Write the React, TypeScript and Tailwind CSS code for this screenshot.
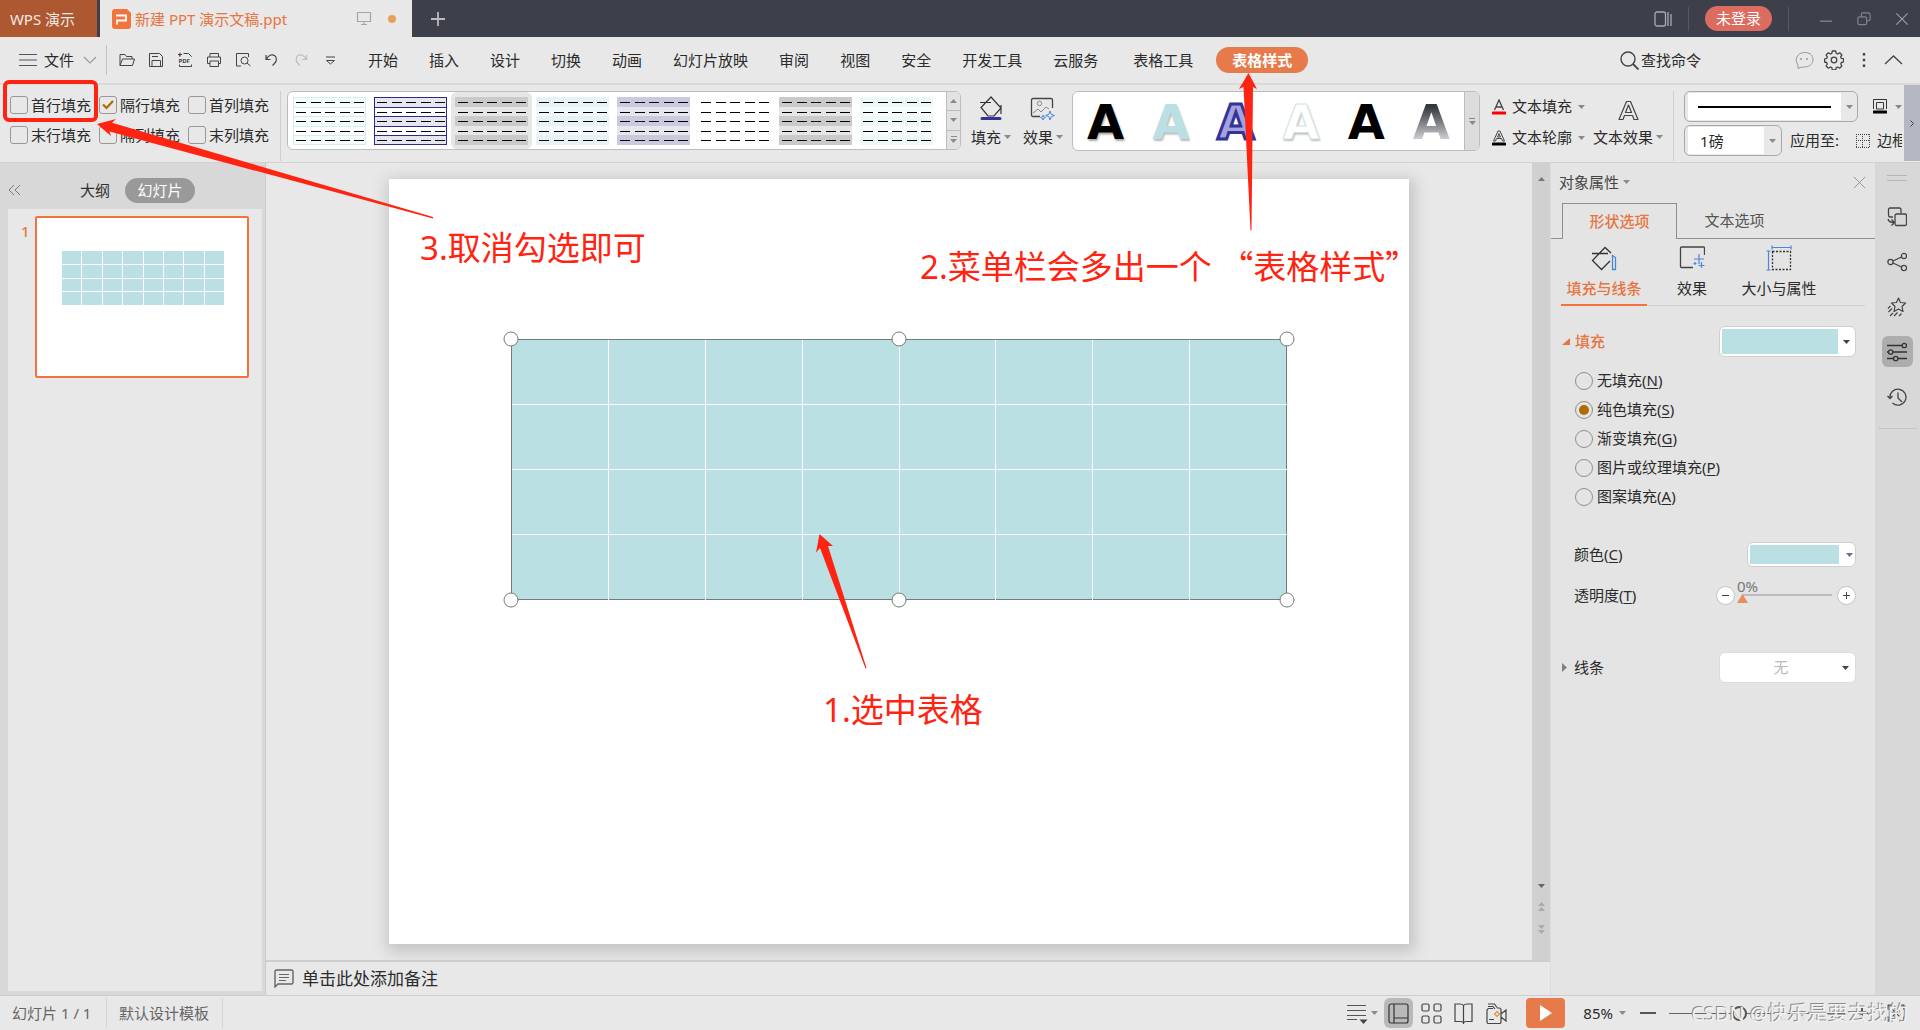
import React from "react";

const MENUS = ["开始", "插入", "设计", "切换", "动画", "幻灯片放映", "审阅", "视图", "安全", "开发工具", "云服务"];

type IconProps = {
  size?: number;
  color?: string;
  children: React.ReactNode;
};

const Icon: React.FC<IconProps> = ({ size = 16, color = "#444", children }) => (
  <svg
    width={size}
    height={size}
    viewBox="0 0 16 16"
    fill="none"
    stroke={color}
    strokeWidth="1"
    className="block shrink-0"
  >
    {children}
  </svg>
);

const Caret: React.FC<{ color?: string }> = ({ color = "#8a8a8a" }) => (
  <svg width="7" height="4" viewBox="0 0 7 4" className="block shrink-0">
    <path d="M0 0h7L3.500 4z" fill={color} />
  </svg>
);

const CaretUp: React.FC<{ color?: string }> = ({ color = "#8a8a8a" }) => (
  <svg width="7" height="4" viewBox="0 0 7 4" className="block shrink-0">
    <path d="M0 4h7L3.500 0z" fill={color} />
  </svg>
);

const TitleBar = () => (
  <header className="flex h-[37px] shrink-0 bg-[#3d404b] text-[15px]">
    <button className="w-[97px] bg-[#ad5830] pt-px pr-3 text-[#f3e9e4]">WPS 演示</button>
    <div className="ml-[3px] flex w-[312px] items-center bg-[#e8e8e8] pt-px pl-3">
      <svg width="19" height="20" viewBox="0 0 19 20" className="mr-1 shrink-0">
        <path d="M3 0h12l4 4v13a3 3 0 0 1-3 3H3a3 3 0 0 1-3-3V3a3 3 0 0 1 3-3z" fill="#f3733c" />
        <path d="M4 6.500h10v5H5v4" stroke="#fff" strokeWidth="1.8" fill="none" />
      </svg>
      <span className="flex-1 whitespace-nowrap text-[#e8743f]">新建 PPT 演示文稿.ppt</span>
      <Icon color="#a5a5a5">
        <path d="M1.500 1.500h13v9h-13zM8 10.500v3M5 13.500h6" strokeWidth="1.2" />
      </Icon>
      <span className="mr-4 ml-4 size-2 rounded-full bg-[#e6a05c]"></span>
    </div>
    <button aria-label="新建标签" className="flex w-[52px] items-center justify-center">
      <Icon color="#b9bac0">
        <path d="M8 1v14M1 8h14" strokeWidth="1.8" />
      </Icon>
    </button>
    <div className="ml-auto flex items-center">
      <button aria-label="工作区">
        <svg width="18" height="18" viewBox="0 0 18 18" fill="none" stroke="#a9abb2">
          <rect x="1" y="2" width="10.500" height="14" rx="2" strokeWidth="1.3" />
          <path d="M14 2v14M17 4v12" strokeWidth="1.3" />
        </svg>
      </button>
      <span className="ml-4 h-6 w-px bg-[#555862]"></span>
      <button className="ml-4 h-[25px] w-[67px] rounded-full bg-[#dc6b60] text-white">未登录</button>
      <span className="ml-4 h-6 w-px bg-[#555862]"></span>
      <div className="flex items-center gap-6 pr-[11px] pl-[30px]">
        <button aria-label="最小化">
          <Icon size={14} color="#82848c">
            <path d="M1 10.500h14" strokeWidth="1.5" />
          </Icon>
        </button>
        <button aria-label="还原">
          <Icon size={14} color="#82848c">
            <path d="M5 5V2.500a1.500 1.500 0 0 1 1.500-1.500H13a2 2 0 0 1 2 2V8a2 2 0 0 1-2 2h-2" strokeWidth="1.3" />
            <rect x="1" y="5.500" width="10" height="9" rx="2" strokeWidth="1.3" />
          </Icon>
        </button>
        <button aria-label="关闭">
          <Icon size={14} color="#a0a2a9">
            <path d="M1.500 1.500l13 13M14.500 1.500l-13 13" strokeWidth="1.2" />
          </Icon>
        </button>
      </div>
    </div>
  </header>
);

const QuickTools = () => (
  <div className="flex gap-[13px]">
    <button aria-label="打开">
      <Icon>
        <path d="M1 13.500V2.500h5l1.500 2H13v2.500M1 13.500L3.500 7H15.500l-2 6.500z" strokeLinejoin="round" />
      </Icon>
    </button>
    <button aria-label="保存">
      <Icon>
        <path d="M1.500 1.500h10l3 3v10h-13zM4 14V8.500h8.500V14M4 4.500h6" strokeLinejoin="round" />
      </Icon>
    </button>
    <button aria-label="输出为PDF">
      <svg width="16" height="16" viewBox="0 0 16 16" fill="none" stroke="#444">
        <path d="M2.500 4.500V3M1 2.500h4M3 .5v4M6.500 1.500h5l3 3V5M2.500 12.500v2h12v-2" />
        <text x="1.500" y="11.300" fontSize="6" fontWeight="700" fill="#444" stroke="none">PDF</text>
      </svg>
    </button>
    <button aria-label="打印">
      <Icon>
        <path d="M4 5V1.500h8.500V5M4 11.500H1.500V5h13v6.500H12.500M4 9h8.500v5.500H4z" strokeLinejoin="round" />
      </Icon>
    </button>
    <button aria-label="打印预览">
      <Icon>
        <path d="M6 14H1.500V1.500h12V5" />
        <circle cx="9.500" cy="8.500" r="3.500" />
        <path d="M12 11l3.500 3" />
      </Icon>
    </button>
    <button aria-label="撤销">
      <Icon>
        <path d="M2 3v4.500h4.500M2.500 7.500C4 3 8 2 10.500 3.500s2.500 6 0 8L8.500 13.500" strokeWidth="1.200" />
      </Icon>
    </button>
    <button aria-label="恢复">
      <Icon color="#bdbdbd">
        <path d="M13.500 3v4.500H9M13 7.500C11.500 3 7.500 2 5 3.500s-2.500 6 0 8L7 13.500" strokeWidth="1.200" />
      </Icon>
    </button>
    <button aria-label="自定义工具栏">
      <Icon>
        <path d="M4 5h9M4.500 8.500h8L8.500 12z" />
      </Icon>
    </button>
  </div>
);

const MenuBar = () => (
  <nav className="flex h-[48px] shrink-0 items-center border-b-2 border-[#dadada] text-[15px] text-[#2b2b2b]">
    <button className="ml-[19px] flex items-center gap-[7px]">
      <svg width="18" height="14" viewBox="0 0 18 14" stroke="#555">
        <path d="M0 1.500h18M0 7h18M0 12.500h18" />
      </svg>
      文件
      <svg width="14" height="8" viewBox="0 0 14 8" fill="none" stroke="#999" className="ml-[2px]">
        <path d="M1 1l6 6 6-6" strokeWidth="1.2" />
      </svg>
    </button>
    <span className="mr-3 ml-[9px] h-[30px] w-px bg-[#c2c2c2]"></span>
    <QuickTools />
    <div className="ml-[30px] flex gap-[31px] whitespace-nowrap">
      {MENUS.map((menu) => (
        <button key={menu}>{menu}</button>
      ))}
    </div>
    <button className="ml-[35px] whitespace-nowrap">表格工具</button>
    <button className="ml-[23px] h-[26px] w-[92px] rounded-full bg-[#e67a4a] font-bold whitespace-nowrap text-white">
      表格样式
    </button>
    <button className="ml-auto flex items-center gap-[2px] whitespace-nowrap">
      <svg width="19" height="19" viewBox="0 0 19 19" fill="none" stroke="#444" strokeWidth="1.400">
        <circle cx="8" cy="8" r="7" />
        <path d="M13 13l5.500 5.500" strokeWidth="1.800" />
      </svg>
      查找命令
    </button>
    <div className="ml-[94px] flex items-center gap-[10px] pr-[17px]">
      <button aria-label="反馈">
        <svg width="19" height="19" viewBox="0 0 19 19" fill="none" stroke="#999">
          <path d="M3 17.500V14C-1 9 2 1.500 9.500 1.500S18 6 18 9s-3 7-8.500 7C7 16 6 16 3 17.500z" />
          <path d="M6 7v2M12 7v2" strokeWidth="1.500" />
        </svg>
      </button>
      <button aria-label="设置">
        <svg width="20" height="20" viewBox="0 0 20 20" fill="none" stroke="#444" strokeWidth="1.300">
          <circle cx="10" cy="10" r="2.800" />
          <path
            d="M8.300 1h3.400l.5 2.300 1.500.7 2-1.300 2.200 2.200-1.200 2 .7 1.500 2.200.5v3l-2.200.6-.7 1.500 1.200 2-2.300 2.200-2-1.200-1.400.6-.5 2.400H8.300l-.5-2.400-1.400-.6-2 1.200-2.300-2.200 1.200-2-.7-1.500L.6 12V9l2-.6.7-1.500-1.200-2 2.200-2.200 2 1.300 1.500-.7z"
            strokeLinejoin="round"
          />
        </svg>
      </button>
      <button aria-label="更多" className="w-5">
        <Icon color="#444">
          <path d="M10 1v2.500M10 6.800v2.500M10 12.600v2.500" strokeWidth="2.400" />
        </Icon>
      </button>
      <button aria-label="收起功能区">
        <svg width="19" height="10" viewBox="0 0 19 10" fill="none" stroke="#444">
          <path d="M1 9l8.500-8L18 9" strokeWidth="1.300" />
        </svg>
      </button>
    </div>
  </nav>
);

type CheckProps = { label: string; checked?: boolean };

const Check: React.FC<CheckProps> = ({ label, checked = false }) => {
  const [on, setOn] = React.useState<boolean>(checked);
  return (
    <label className="relative flex h-[30px] items-center gap-[3px] whitespace-nowrap">
      <input
        type="checkbox"
        checked={on}
        onChange={() => setOn(!on)}
        className="size-[18px] appearance-none rounded-[3px] border border-[#989898] bg-[#e8e8e8]"
      />
      {on && (
        <svg width="12" height="10" viewBox="0 0 12 10" className="absolute left-[3px]">
          <path d="M1 4.500l3.500 3.500L11 1" stroke="#b36a00" strokeWidth="2.200" fill="none" />
        </svg>
      )}
      {label}
    </label>
  );
};

type Style = { odd: string; even: string; line?: string; selected?: boolean };

const TABLE_STYLES: Style[] = [
  { odd: "#f5fcfc", even: "#ffffff", line: "#d8eceb" },
  { odd: "#e6e6ef", even: "#ffffff", line: "#2a2a8c" },
  { odd: "#cacaca", even: "#e6e6e6", selected: true },
  { odd: "#e6f2f4", even: "#f3f8fb" },
  { odd: "#cacade", even: "#e6e6ee" },
  { odd: "#ffffff", even: "#ffffff" },
  { odd: "#cacaca", even: "#e6e6e6" },
  { odd: "#eff8f8", even: "#f8fcfc" },
];

const StyleThumb: React.FC<{ style: Style }> = ({ style }) => (
  <svg width="73" height="48" viewBox="0 0 73 48" shapeRendering="crispEdges" className="block">
    {[0, 1, 2, 3, 4].map((i) => (
      <g key={i}>
        <rect x="0" y={i * 9.5} width="73" height="9.5" fill={i % 2 ? style.even : style.odd} />
        <path d={`M3 ${Math.round(i * 9.5) + 5.5}h69`} stroke="#000" strokeDasharray="10 4.6" />
      </g>
    ))}
    {style.line && (
      <path
        d="M.5 .5h72v47h-72zM0 10.500h73M0 19.500h73M0 29.500h73M0 38.500h73"
        stroke={style.line}
        fill="none"
      />
    )}
  </svg>
);

const StyleGallery = () => (
  <div className="ml-[6px] flex h-[59px] shrink-0 overflow-hidden rounded-md border border-[#bdbdbd] bg-white">
    <div className="flex pr-[9px] pl-px">
      {TABLE_STYLES.map((style, i) => (
        <button
          key={i}
          aria-label={"表格样式 " + (i + 1)}
          className={
            style.selected
              ? "flex w-[81px] items-center justify-center rounded-md bg-[#e6e6e6]"
              : "flex w-[81px] items-center justify-center"
          }
        >
          <StyleThumb style={style} />
        </button>
      ))}
    </div>
    <div className="flex w-[14px] flex-col divide-y divide-[#bdbdbd] border-l border-[#bdbdbd] bg-[#e2e2e2]">
      <button aria-label="上一行" className="flex flex-1 items-center justify-center">
        <CaretUp />
      </button>
      <button aria-label="下一行" className="flex flex-1 items-center justify-center">
        <Caret />
      </button>
      <button aria-label="更多样式" className="flex flex-1 flex-col items-center justify-center gap-[2px]">
        <span className="h-px w-[6px] bg-[#8a8a8a]"></span>
        <Caret />
      </button>
    </div>
  </div>
);

const BigTool: React.FC<{ label: string; children: React.ReactNode }> = ({ label, children }) => (
  <button className="flex flex-col items-center gap-[5px] whitespace-nowrap">
    <span className="flex h-[26px] items-end">{children}</span>
    <span className="flex items-center gap-[3px]">
      {label}
      <Caret />
    </span>
  </button>
);

const LETTER = "font-['DejaVu_Sans','Noto_Sans',sans-serif] text-[48px] leading-[52px] font-bold";

const WordArtGallery = () => (
  <div className="ml-[9px] flex h-[60px] shrink-0 overflow-hidden rounded-md border border-[#bdbdbd] bg-white">
    <div className="flex w-[391px] items-center justify-around pt-[2px]">
      <button className={LETTER + " text-black [text-shadow:1px_2px_2px_#aaa]"}>A</button>
      <button className={LETTER + " text-[#bae0e3] [text-shadow:1px_2px_2px_#bbb]"}>A</button>
      <button className={LETTER + " text-[#a3a3dd] [-webkit-text-stroke:3px_#33339a]"}>A</button>
      <button className={LETTER + " text-white [-webkit-text-stroke:1px_#cfe3e3] [text-shadow:1px_2px_2px_#bbb]"}>
        A
      </button>
      <button className={LETTER + " text-black"}>A</button>
      <button className={LETTER + " bg-linear-to-b from-[#35383d] from-20% to-[#c8c9cc] to-80% bg-clip-text text-transparent"}>
        A
      </button>
    </div>
    <button
      aria-label="更多艺术字"
      className="flex w-[15px] flex-col items-center justify-center gap-[2px] border-l border-[#bdbdbd] bg-[#dcdcdc]"
    >
      <span className="h-px w-[6px] bg-[#8a8a8a]"></span>
      <Caret />
    </button>
  </div>
);

const Ribbon = () => (
  <section className="flex h-[78px] shrink-0 items-start overflow-hidden border-b border-[#d2d2d2] pt-[6px] text-[15px] text-[#2b2b2b]">
    <div className="-mt-px ml-[10px] grid shrink-0 grid-cols-[89px_89px_92px]">
      <Check label="首行填充" />
      <Check label="隔行填充" checked />
      <Check label="首列填充" />
      <Check label="末行填充" />
      <Check label="隔列填充" />
      <Check label="末列填充" />
    </div>
    <span className="h-[70px] w-px shrink-0 bg-[#cfcfcf]"></span>
    <StyleGallery />
    <div className="ml-[10px] flex shrink-0 gap-3 pt-1">
      <BigTool label="填充">
        <svg width="24" height="25" viewBox="0 0 24 25" fill="none" stroke="#333">
          <path d="M1 6.500h11M12 1L2 11.500l7 8.500h6l7-8L12 1zM22 9v9" strokeWidth="1.200" />
          <path d="M3 22.500h18" stroke="#33339a" strokeWidth="3" strokeLinecap="round" />
        </svg>
      </BigTool>
      <BigTool label="效果">
        <svg width="26" height="24" viewBox="0 0 26 24" fill="none" stroke="#444">
          <path d="M10 19.500H3a1.500 1.500 0 0 1-1.500-1.500V3A1.500 1.500 0 0 1 3 1.500h18A1.500 1.500 0 0 1 22.500 3v8" strokeWidth="1.300" />
          <path d="M3 16l5-4 3 3 5-5 3 2" stroke="#888" />
          <circle cx="9.500" cy="6.500" r="2.200" stroke="#888" />
          <path d="M20 14l1.200 3.300 3.300 1.200-3.300 1.200L20 23l-1.200-3.300-3.300-1.200 3.300-1.200zM13 18l.7 1.800 1.800.7-1.800.7L13 23l-.7-1.800-1.800-.7 1.800-.7z" stroke="#4a86dc" />
        </svg>
      </BigTool>
    </div>
    <WordArtGallery />
    <div className="ml-[12px] flex shrink-0 flex-col">
      <button className="flex h-[31px] items-center gap-[6px] whitespace-nowrap">
        <svg width="14" height="16" viewBox="0 0 14 16" fill="none" stroke="#444">
          <path d="M2.500 11L7 1l4.500 10M4 8h6" strokeWidth="1.300" />
          <path d="M1 14h12" stroke="#f00" strokeWidth="3" strokeLinecap="round" />
        </svg>
        文本填充
        <Caret />
      </button>
      <button className="flex h-[31px] items-center gap-[6px] whitespace-nowrap">
        <svg width="14" height="16" viewBox="0 0 14 16" fill="none" stroke="#444">
          <path d="M1.500 11L6 1h2l4.500 10h-2l-1-2.500h-5l-1 2.500zM5.500 7h3L7 3.500z" />
          <path d="M1 14h12" stroke="#000" strokeWidth="3" strokeLinecap="round" />
        </svg>
        文本轮廓
        <Caret />
      </button>
    </div>
    <div className="ml-[8px] shrink-0 pt-1">
      <BigTool label="文本效果">
        <svg width="21" height="21" viewBox="0 0 21 21" fill="none" stroke="#444" strokeWidth="1.200">
          <path d="M1 19.500L8.500 1.500h4L20 19.500h-4l-1.500-4h-8l-1.500 4zM7.500 12.500h6L10.500 5z" strokeLinejoin="round" />
        </svg>
      </BigTool>
    </div>
    <span className="ml-[10px] h-[70px] w-px shrink-0 bg-[#cfcfcf]"></span>
    <div className="ml-[10px] flex min-w-0 flex-1 flex-col gap-[3px] overflow-hidden">
      <div className="flex items-center">
        <button
          aria-label="线型"
          className="flex h-[31px] w-[174px] shrink-0 items-center rounded-md border border-[#a9a9a9] pr-1 pl-[3px]"
        >
          <span className="flex h-[27px] flex-1 items-center bg-white px-[10px]">
            <span className="h-[2px] w-full bg-black"></span>
          </span>
          <span className="ml-[5px]">
            <Caret />
          </span>
        </button>
        <button aria-label="边框颜色" className="ml-[15px] flex shrink-0 items-center gap-2">
          <svg width="14" height="15" viewBox="0 0 14 15" fill="none" stroke="#333">
            <path d="M.5 10V.5h13V10M3.500 10V3.500h7V10z" />
            <path d="M1 13h12" stroke="#000" strokeWidth="3" strokeLinecap="round" />
          </svg>
          <Caret />
        </button>
      </div>
      <div className="flex items-center whitespace-nowrap">
        <div className="flex h-[31px] w-[98px] shrink-0 items-center rounded-md border border-[#a9a9a9] pr-[5px] pl-[3px]">
          <input
            aria-label="线宽"
            defaultValue="1磅"
            className="h-[27px] w-0 flex-1 bg-white pl-3"
          />
          <button aria-label="选择线宽" className="ml-[5px]">
            <Caret />
          </button>
        </div>
        <span className="ml-2 shrink-0">应用至:</span>
        <button className="ml-[17px] flex shrink-0 items-center gap-[7px]">
          <svg width="14" height="14" viewBox="0 0 14 14" fill="none" stroke="#444" strokeDasharray="1 1" shapeRendering="crispEdges">
            <path d="M0 .5h14M0 6.500h14M0 13.500h14M.5 0v14M6.500 0v14M13.500 0v14" />
          </svg>
          边框
        </button>
      </div>
    </div>
    <button
      aria-label="展开功能区"
      className="-mt-[6px] ml-[2px] flex h-[76px] w-4 shrink-0 items-center justify-center bg-[#b5b8c2]"
    >
      <svg width="4" height="7" viewBox="0 0 4 7" fill="none" stroke="#444">
        <path d="M.5 .5l3 3-3 3" />
      </svg>
    </button>
  </section>
);

const ROWS = [0, 1, 2, 3];
const COLS = [0, 1, 2, 3, 4, 5, 6, 7];

const SlideList = () => (
  <aside className="flex w-[266px] shrink-0 flex-col border-r border-[#c9c9c9] bg-[#d8d8d8] pr-[3px] pb-1 pl-2 text-[15px]">
    <div className="flex h-[46px] items-center pt-2">
      <button aria-label="折叠">
        <svg width="13" height="12" viewBox="0 0 13 12" fill="none" stroke="#7c7c7c">
          <path d="M6 1L1 6l5 5M12 1L7 6l5 5" />
        </svg>
      </button>
      <button className="ml-[59px] text-[#333]">大纲</button>
      <button className="ml-[15px] h-[25px] w-[70px] rounded-full bg-[#999] text-white">幻灯片</button>
    </div>
    <div className="flex flex-1 items-start bg-[#e8e8e8] pt-[7px] pl-[13px]">
      <span className="w-[14px] pt-1 font-medium text-[#f3733c]">1</span>
      <button
        aria-label="幻灯片 1"
        className="h-[162px] w-[214px] rounded-xs border-2 border-[#f3733c] bg-white pt-[33px] pr-[23px] pb-[73px] pl-[25px]"
      >
        <div className="grid h-[54px] grid-cols-8 gap-px">
          {ROWS.map((r) => COLS.map((c) => <span key={r + "-" + c} className="bg-[#bae0e3]"></span>))}
        </div>
      </button>
    </div>
  </aside>
);

const HANDLES = [
  "top-0 left-0",
  "top-0 left-1/2",
  "top-0 left-full",
  "top-full left-0",
  "top-full left-1/2",
  "top-full left-full",
];

const Canvas = () => (
  <main className="flex min-w-0 flex-1 flex-col">
    <div className="flex min-h-0 flex-1">
      <div className="min-w-0 flex-1 overflow-hidden px-[123px] pt-4">
        <div className="aspect-[4/3] w-full bg-white pt-40 shadow-[2px_4px_14px_4px_#c4c4c4]">
          <div className="relative mx-auto w-[776px]">
            <table className="h-[261px] w-full table-fixed border-collapse border border-[#6f7d7e] bg-[#bae0e3]">
              <tbody>
                {ROWS.map((r) => (
                  <tr key={r}>
                    {COLS.map((c) => (
                      <td
                        key={c}
                        className="border-t border-l border-white first:border-l-[#6f7d7e] [tr:first-child>&]:border-t-[#6f7d7e]"
                      ></td>
                    ))}
                  </tr>
                ))}
              </tbody>
            </table>
            {HANDLES.map((pos) => (
              <span
                key={pos}
                className={
                  "absolute size-[15px] -translate-1/2 rounded-full border border-[#777] bg-white " + pos
                }
              ></span>
            ))}
          </div>
        </div>
      </div>
      <div className="flex w-[18px] shrink-0 flex-col items-center bg-[#d0d0d0] pt-[14px] pb-[26px]">
        <CaretUp color="#777" />
        <div className="mt-auto flex flex-col items-center gap-[14px]">
          <Caret color="#666" />
          <span className="flex flex-col gap-px">
            <CaretUp color="#aaa" />
            <CaretUp color="#aaa" />
          </span>
          <span className="flex flex-col gap-px">
            <Caret color="#aaa" />
            <Caret color="#aaa" />
          </span>
        </div>
      </div>
    </div>
    <div className="flex h-[35px] shrink-0 items-center border-t-2 border-[#cdcdcd] pl-2 text-[17px] text-[#2b2b2b]">
      <svg width="20" height="19" viewBox="0 0 20 19" fill="none" stroke="#666" className="mr-2">
        <path d="M1 18V2.500A1.500 1.500 0 0 1 2.500 1h15A1.500 1.500 0 0 1 19 2.500v11a1.500 1.500 0 0 1-1.500 1.500H4z" strokeWidth="1.400" />
        <path d="M5 5.500h10M5 8.500h10M5 11.500h7" />
      </svg>
      单击此处添加备注
    </div>
  </main>
);

const FILLS = [
  { text: "无填充", mnemonic: "N" },
  { text: "纯色填充", mnemonic: "S" },
  { text: "渐变填充", mnemonic: "G" },
  { text: "图片或纹理填充", mnemonic: "P" },
  { text: "图案填充", mnemonic: "A" },
];

const Properties = () => {
  const [fill, setFill] = React.useState<string>("S");
  const [alpha, setAlpha] = React.useState<number>(0);
  return (
    <aside className="w-[325px] shrink-0 border-l border-[#dcdcdc] bg-[#e4e4e4] text-[15px] text-[#2b2b2b]">
      <div className="flex h-10 items-center justify-between pr-[9px] pb-[2px] pl-2">
        <button className="flex items-center gap-1 text-[#444]">
          对象属性
          <Caret />
        </button>
        <button aria-label="关闭面板">
          <Icon size={13} color="#888">
            <path d="M1 1l14 14M15 1L1 15" />
          </Icon>
        </button>
      </div>
      <div className="flex h-9">
        <span className="w-[11px] border-b border-[#8f8f8f]"></span>
        <button className="w-[115px] border border-b-0 border-[#8f8f8f] font-medium text-[#e8743f]">形状选项</button>
        <button className="w-[115px] border-b border-[#8f8f8f] text-[#555]">文本选项</button>
        <span className="flex-1 border-b border-[#8f8f8f]"></span>
      </div>
      <div className="mx-[10px] flex h-[67px] border-b border-[#d0d0d0]">
        <button className="-mb-px flex w-[86px] flex-col items-center gap-[6px] border-b-2 border-[#f3733c] pt-[6px] font-medium text-[#e8743f]">
          <svg width="26" height="26" viewBox="0 0 26 26" fill="none" stroke="#333">
            <path d="M1 8.500h16M20 8L14 2.500 1.500 15.500l9 9L19 16" strokeWidth="1.300" />
            <path d="M21.500 10.500l3 2v12h-3z" stroke="#4a86dc" strokeWidth="1.300" />
          </svg>
          填充与线条
        </button>
        <button className="ml-[21px] flex w-12 flex-col items-center gap-[6px] pt-[6px]">
          <svg width="26" height="26" viewBox="0 0 26 26" fill="none" stroke="#444">
            <path d="M14 22.500H2.500A1 1 0 0 1 1.500 21.500V3A1 1 0 0 1 2.500 2h22a1 1 0 0 1 1 1v7" strokeWidth="1.300" />
            <path d="M20 9v10M15 14h10M22.500 17v6M19.500 20.500h6M16 17v3M14.500 18.500h3" stroke="#4a86dc" strokeWidth="1.200" />
          </svg>
          效果
        </button>
        <button className="ml-[22px] flex w-[82px] flex-col items-center gap-[6px] pt-[6px]">
          <svg width="26" height="26" viewBox="0 0 26 26" fill="none" stroke="#333">
            <path d="M6.500 6.500h18v18h-18z" strokeDasharray="2 1.500" strokeWidth="1.300" />
            <path d="M6 2.500h19M6 .5v4M25 .5v4M2.500 6v19M.5 6h4M.5 25h4" stroke="#4a86dc" strokeWidth="1.200" />
          </svg>
          大小与属性
        </button>
      </div>
      <div className="mt-5 flex items-center justify-between pr-[19px] pl-[11px]">
        <button className="flex items-center gap-[5px] font-medium text-[#e8743f]">
          <svg width="8" height="7" viewBox="0 0 8 7">
            <path d="M8 0v7H0z" fill="#e8743f" />
          </svg>
          填充
        </button>
        <button
          aria-label="填充颜色"
          className="flex h-[31px] w-[137px] items-center gap-[5px] rounded-md border border-[#cfcfcf] bg-white px-[2px]"
        >
          <span className="h-[25px] w-[116px] bg-[#bae0e3]"></span>
          <Caret color="#444" />
        </button>
      </div>
      <fieldset className="mt-[9px] pl-6">
        {FILLS.map((item) => (
          <label key={item.mnemonic} className="flex h-[29px] items-center gap-1">
            <input
              type="radio"
              name="fill"
              checked={fill === item.mnemonic}
              onChange={() => setFill(item.mnemonic)}
              className="size-[18px] appearance-none rounded-full border border-[#8f8f8f] bg-[#e4e4e4] bg-clip-content p-[3px] checked:bg-[#b36a00]"
            />
            <span>
              {item.text}(<u className="underline-offset-2">{item.mnemonic}</u>)
            </span>
          </label>
        ))}
      </fieldset>
      <div className="mt-[31px] flex items-center justify-between pr-[19px] pl-[23px]">
        <span>
          颜色(<u className="underline-offset-2">C</u>)
        </span>
        <button
          aria-label="颜色"
          className="flex h-[25px] w-[109px] items-center gap-[7px] rounded-md border border-[#cfcfcf] bg-white px-[2px]"
        >
          <span className="h-[19px] w-[89px] bg-[#bae0e3]"></span>
          <Caret color="#66709c" />
        </button>
      </div>
      <div className="mt-[13px] flex h-[30px] items-center pr-[19px] pl-[23px]">
        <label htmlFor="alpha" className="flex-1">
          透明度(<u className="underline-offset-2">T</u>)
        </label>
        <button
          aria-label="减小透明度"
          onClick={() => setAlpha(Math.max(0, alpha - 1))}
          className="flex size-[19px] items-center justify-center rounded-full border border-[#c4c4c4] bg-white"
        >
          <span className="h-px w-[7px] bg-[#444]"></span>
        </button>
        <div className="relative mr-[5px] ml-[2px] h-[30px] w-[95px]">
          <span className="absolute -top-1 left-0 text-[15px] leading-5 text-[#777]">{alpha}%</span>
          <input
            id="alpha"
            type="range"
            value={alpha}
            onChange={(e) => setAlpha(Number(e.currentTarget.value))}
            className="absolute top-[14px] left-[5px] h-[2px] w-[90px] appearance-none bg-[#bcbcc2] [&::-webkit-slider-thumb]:appearance-none"
          />
          <svg width="11" height="9" viewBox="0 0 11 9" className="pointer-events-none absolute top-[14px] left-0">
            <path d="M5.500 0L11 9H0z" fill="#e68f5a" />
          </svg>
        </div>
        <button
          aria-label="增大透明度"
          onClick={() => setAlpha(Math.min(100, alpha + 1))}
          className="flex size-[19px] items-center justify-center rounded-full border border-[#c4c4c4] bg-white"
        >
          <svg width="7" height="7" viewBox="0 0 7 7" stroke="#444">
            <path d="M3.500 0v7M0 3.500h7" />
          </svg>
        </button>
      </div>
      <div className="mt-[42px] flex items-center justify-between pr-[19px] pl-[11px]">
        <button className="flex items-center gap-[7px]">
          <svg width="5" height="9" viewBox="0 0 5 9">
            <path d="M0 0l5 4.500L0 9z" fill="#7a8484" />
          </svg>
          线条
        </button>
        <button
          aria-label="线条类型"
          className="flex h-[31px] w-[137px] items-center rounded-md border border-[#dcdcdc] bg-white pr-[6px] text-[#bbb]"
        >
          <span className="flex-1 text-center">无</span>
          <Caret color="#444" />
        </button>
      </div>
    </aside>
  );
};

const SideRail = () => (
  <aside className="flex w-[45px] shrink-0 flex-col items-center bg-[#d8d8d8] pr-px">
    <div className="mt-3 h-[6px] w-5 border-y border-[#b5b5b5]"></div>
    <div className="mt-5 flex w-[39px] flex-col items-center gap-[14px] border-b border-[#c6c6c6] pb-4">
      <button aria-label="切换窗口" className="flex size-[31px] items-center justify-center">
        <svg width="20" height="20" viewBox="0 0 20 20" fill="none" stroke="#444" strokeWidth="1.300">
          <path d="M1.500 8V2.500A1.500 1.500 0 0 1 3 1h9.500A1.500 1.500 0 0 1 14 2.500V6" />
          <rect x="8" y="7" width="11.500" height="11.500" rx="1.500" />
          <path d="M1 12c.5 2.500 2 3.500 6 3.500M4.500 12.500l3 3-3 3M1.500 8c0 1.500.5 2 1.500 2h3" />
        </svg>
      </button>
      <button aria-label="分享" className="flex size-[31px] items-center justify-center">
        <svg width="20" height="20" viewBox="0 0 20 20" fill="none" stroke="#444" strokeWidth="1.300">
          <circle cx="3.500" cy="10" r="2.600" />
          <circle cx="17" cy="4" r="2.600" />
          <circle cx="17" cy="16" r="2.600" />
          <path d="M6 9l8.500-4M6 11l8.500 4" />
        </svg>
      </button>
      <button aria-label="动画效果" className="flex size-[31px] items-center justify-center">
        <svg width="20" height="20" viewBox="0 0 20 20" fill="none" stroke="#444" strokeWidth="1.200">
          <path d="M11.500 1l2 4.500 5 .5-3.500 3.500 1 5-4.500-2.500-4.500 2.500 1-5L4.500 6l5-.5z" strokeLinejoin="round" />
          <path d="M3.500 9L1 11.500M5 11.500L1.500 15M6 16l-3 3M10.500 15.500L7 19M14.500 16.500L12 19" />
        </svg>
      </button>
      <button aria-label="属性" className="flex size-[31px] items-center justify-center rounded-md bg-[#adadad]">
        <svg width="20" height="20" viewBox="0 0 20 20" fill="none" stroke="#333" strokeWidth="1.300">
          <path d="M0 3.500h15M0 10h1.500M6 10h14M0 16.500h6.500M11 16.500h9" />
          <circle cx="17.300" cy="3.500" r="2.200" />
          <circle cx="3.700" cy="10" r="2.200" />
          <circle cx="8.700" cy="16.500" r="2.200" />
        </svg>
      </button>
      <button aria-label="历史版本" className="flex size-[31px] items-center justify-center">
        <svg width="20" height="20" viewBox="0 0 20 20" fill="none" stroke="#444" strokeWidth="1.300">
          <path d="M3 11a8 8 0 1 1 2.500 5M.5 9l2.500 2.500L5.500 9M11 5.500V11l4 4" />
        </svg>
      </button>
    </div>
  </aside>
);

const StatusBar = () => (
  <footer className="flex h-[35px] shrink-0 items-center border-t border-[#cdcdcd] text-[15px] text-[#666]">
    <span className="flex h-[30px] w-[107px] items-center border-r border-[#d6d6d6] pl-3 whitespace-nowrap">
      幻灯片 1 / 1
    </span>
    <span className="flex h-[30px] w-[116px] items-center border-r border-[#d6d6d6] pl-3 whitespace-nowrap">
      默认设计模板
    </span>
    <div className="ml-auto flex items-center">
      <button aria-label="备注" className="flex items-center gap-[3px]">
        <svg width="21" height="21" viewBox="0 0 21 21" fill="none" stroke="#555">
          <path d="M0 2.500h19M0 7.500h19M0 12.500h19M0 16.500h10" strokeWidth="1.200" />
          <path d="M12.500 16.500h8L16.500 21z" fill="#444" stroke="none" />
        </svg>
        <Caret />
      </button>
      <button aria-label="普通视图" className="ml-[6px] flex h-[30px] w-[29px] items-center justify-center rounded-md bg-[#b9b9b9]">
        <svg width="21" height="21" viewBox="0 0 21 21" fill="none" stroke="#333" strokeWidth="1.200">
          <rect x="1" y="1" width="19" height="19" rx="2" />
          <path d="M6 1v19M6 15h14" />
        </svg>
      </button>
      <button aria-label="幻灯片浏览" className="ml-2">
        <svg width="21" height="21" viewBox="0 0 21 21" fill="none" stroke="#444" strokeWidth="1.200">
          <rect x="1" y="1" width="7" height="7" rx="1.500" />
          <rect x="13" y="1" width="7" height="7" rx="1.500" />
          <rect x="1" y="13" width="7" height="7" rx="1.500" />
          <rect x="13" y="13" width="7" height="7" rx="1.500" />
        </svg>
      </button>
      <button aria-label="阅读视图" className="ml-3">
        <svg width="19" height="21" viewBox="0 0 19 21" fill="none" stroke="#444" strokeWidth="1.200">
          <path d="M9.500 2.500C8.500 1.200 7.500 1 6 1H1v17.500h6c1.500 0 2 .5 2.500 1.500.5-1 1-1.500 2.500-1.500h6V1h-5c-1.500 0-2.500.2-3.500 1.500zM9.500 2.500V21" />
        </svg>
      </button>
      <button aria-label="录制" className="ml-[13px]">
        <svg width="21" height="21" viewBox="0 0 21 21" fill="none" stroke="#444" strokeWidth="1.200">
          <path d="M2 1h6.500L11 4.500M2 3.500h5L9 6M11 5h2a2 2 0 0 1 2 2v12a1.500 1.500 0 0 1-1.500 1.500h-11A1.500 1.500 0 0 1 1 19V7.500A2 2 0 0 1 3 5.500h4M15 11l5-4v11l-5-4M3 16.500h5" />
          <path d="M11 8.500L13.500 11 11 13.500 8.500 11z" stroke="#d99a3c" />
        </svg>
      </button>
      <button aria-label="放映" className="ml-[19px] flex h-[30px] w-[39px] items-center justify-center rounded bg-[#e67a4a]">
        <svg width="12" height="16" viewBox="0 0 12 16">
          <path d="M0 0l12 8L0 16z" fill="#fff" />
        </svg>
      </button>
      <button className="ml-[18px] flex items-center gap-[6px] text-[#2b2b2b]">
        85%
        <Caret />
      </button>
      <button aria-label="缩小" className="ml-[14px] h-[2px] w-4 bg-[#555]"></button>
      <div className="ml-[13px] flex h-4 w-[176px] items-center">
        <input
          type="range"
          aria-label="缩放"
          defaultValue={39}
          className="h-px w-full appearance-none bg-[#666] [&::-webkit-slider-thumb]:size-[15px] [&::-webkit-slider-thumb]:appearance-none [&::-webkit-slider-thumb]:rounded-full [&::-webkit-slider-thumb]:border-2 [&::-webkit-slider-thumb]:border-[#555] [&::-webkit-slider-thumb]:bg-[#e8e8e8]"
        />
      </div>
      <button aria-label="放大" className="ml-[10px]">
        <Icon size={14} color="#444">
          <path d="M8 1v14M1 8h14" strokeWidth="2" />
        </Icon>
      </button>
      <button aria-label="适应窗口" className="mr-[15px] ml-[18px]">
        <Icon size={18}>
          <path d="M1 5V1h4M11 1h4v4M15 11v4h-4M5 15H1v-4M5 5l6 6M11 5l-6 6" />
        </Icon>
      </button>
    </div>
  </footer>
);

const NOTE = "absolute text-[33px] leading-10 whitespace-nowrap text-[#ff2412]";

const Annotations = () => (
  <div className="pointer-events-none absolute inset-0 overflow-hidden">
    <div className="absolute top-[80px] left-[3px] h-[42px] w-[95px] rounded-md border-4 border-[#ff2412]"></div>
    <svg width="1920" height="1030" viewBox="0 0 1920 1030" className="absolute top-0 left-0" fill="#ff2412">
      <path d="M97 124l19-5-4 3.700L433 217v1.500L109.500 131.500l1.500 4.500z" />
      <path d="M1248.500 73l8.500 16-4-2-1.500 143.500h-1L1243.500 87l-4.500 2z" />
      <path d="M819.500 534l13.500 12h-5l38.500 122-1 .5L820 548l-4 4.500z" />
    </svg>
    <p className={NOTE + " top-[228px] left-[420px]"}>3.取消勾选即可</p>
    <p className={NOTE + " top-[245px] left-[920px]"}>
      2.菜单栏会多出一个 <span className="font-['Noto_Sans_CJK_SC',sans-serif]">“表格样式”</span>
    </p>
    <p className={NOTE + " top-[690px] left-[823px]"}>1.选中表格</p>
    <p className="absolute right-3 bottom-1 text-[20px] leading-6 whitespace-nowrap text-[#f2f2f2] [text-shadow:-1px_-1px_0_#8a8a8a]">
      CSDN @快乐是要去找的
    </p>
  </div>
);

const App = () => (
  <div
    lang="zh-CN"
    className="relative flex h-screen flex-col overflow-hidden bg-[#e8e8e8] font-['Noto_Sans','Noto_Sans_CJK_SC',sans-serif]"
  >
    <TitleBar />
    <MenuBar />
    <Ribbon />
    <div className="flex min-h-0 flex-1">
      <SlideList />
      <Canvas />
      <Properties />
      <SideRail />
    </div>
    <StatusBar />
    <Annotations />
  </div>
);

export default App;
